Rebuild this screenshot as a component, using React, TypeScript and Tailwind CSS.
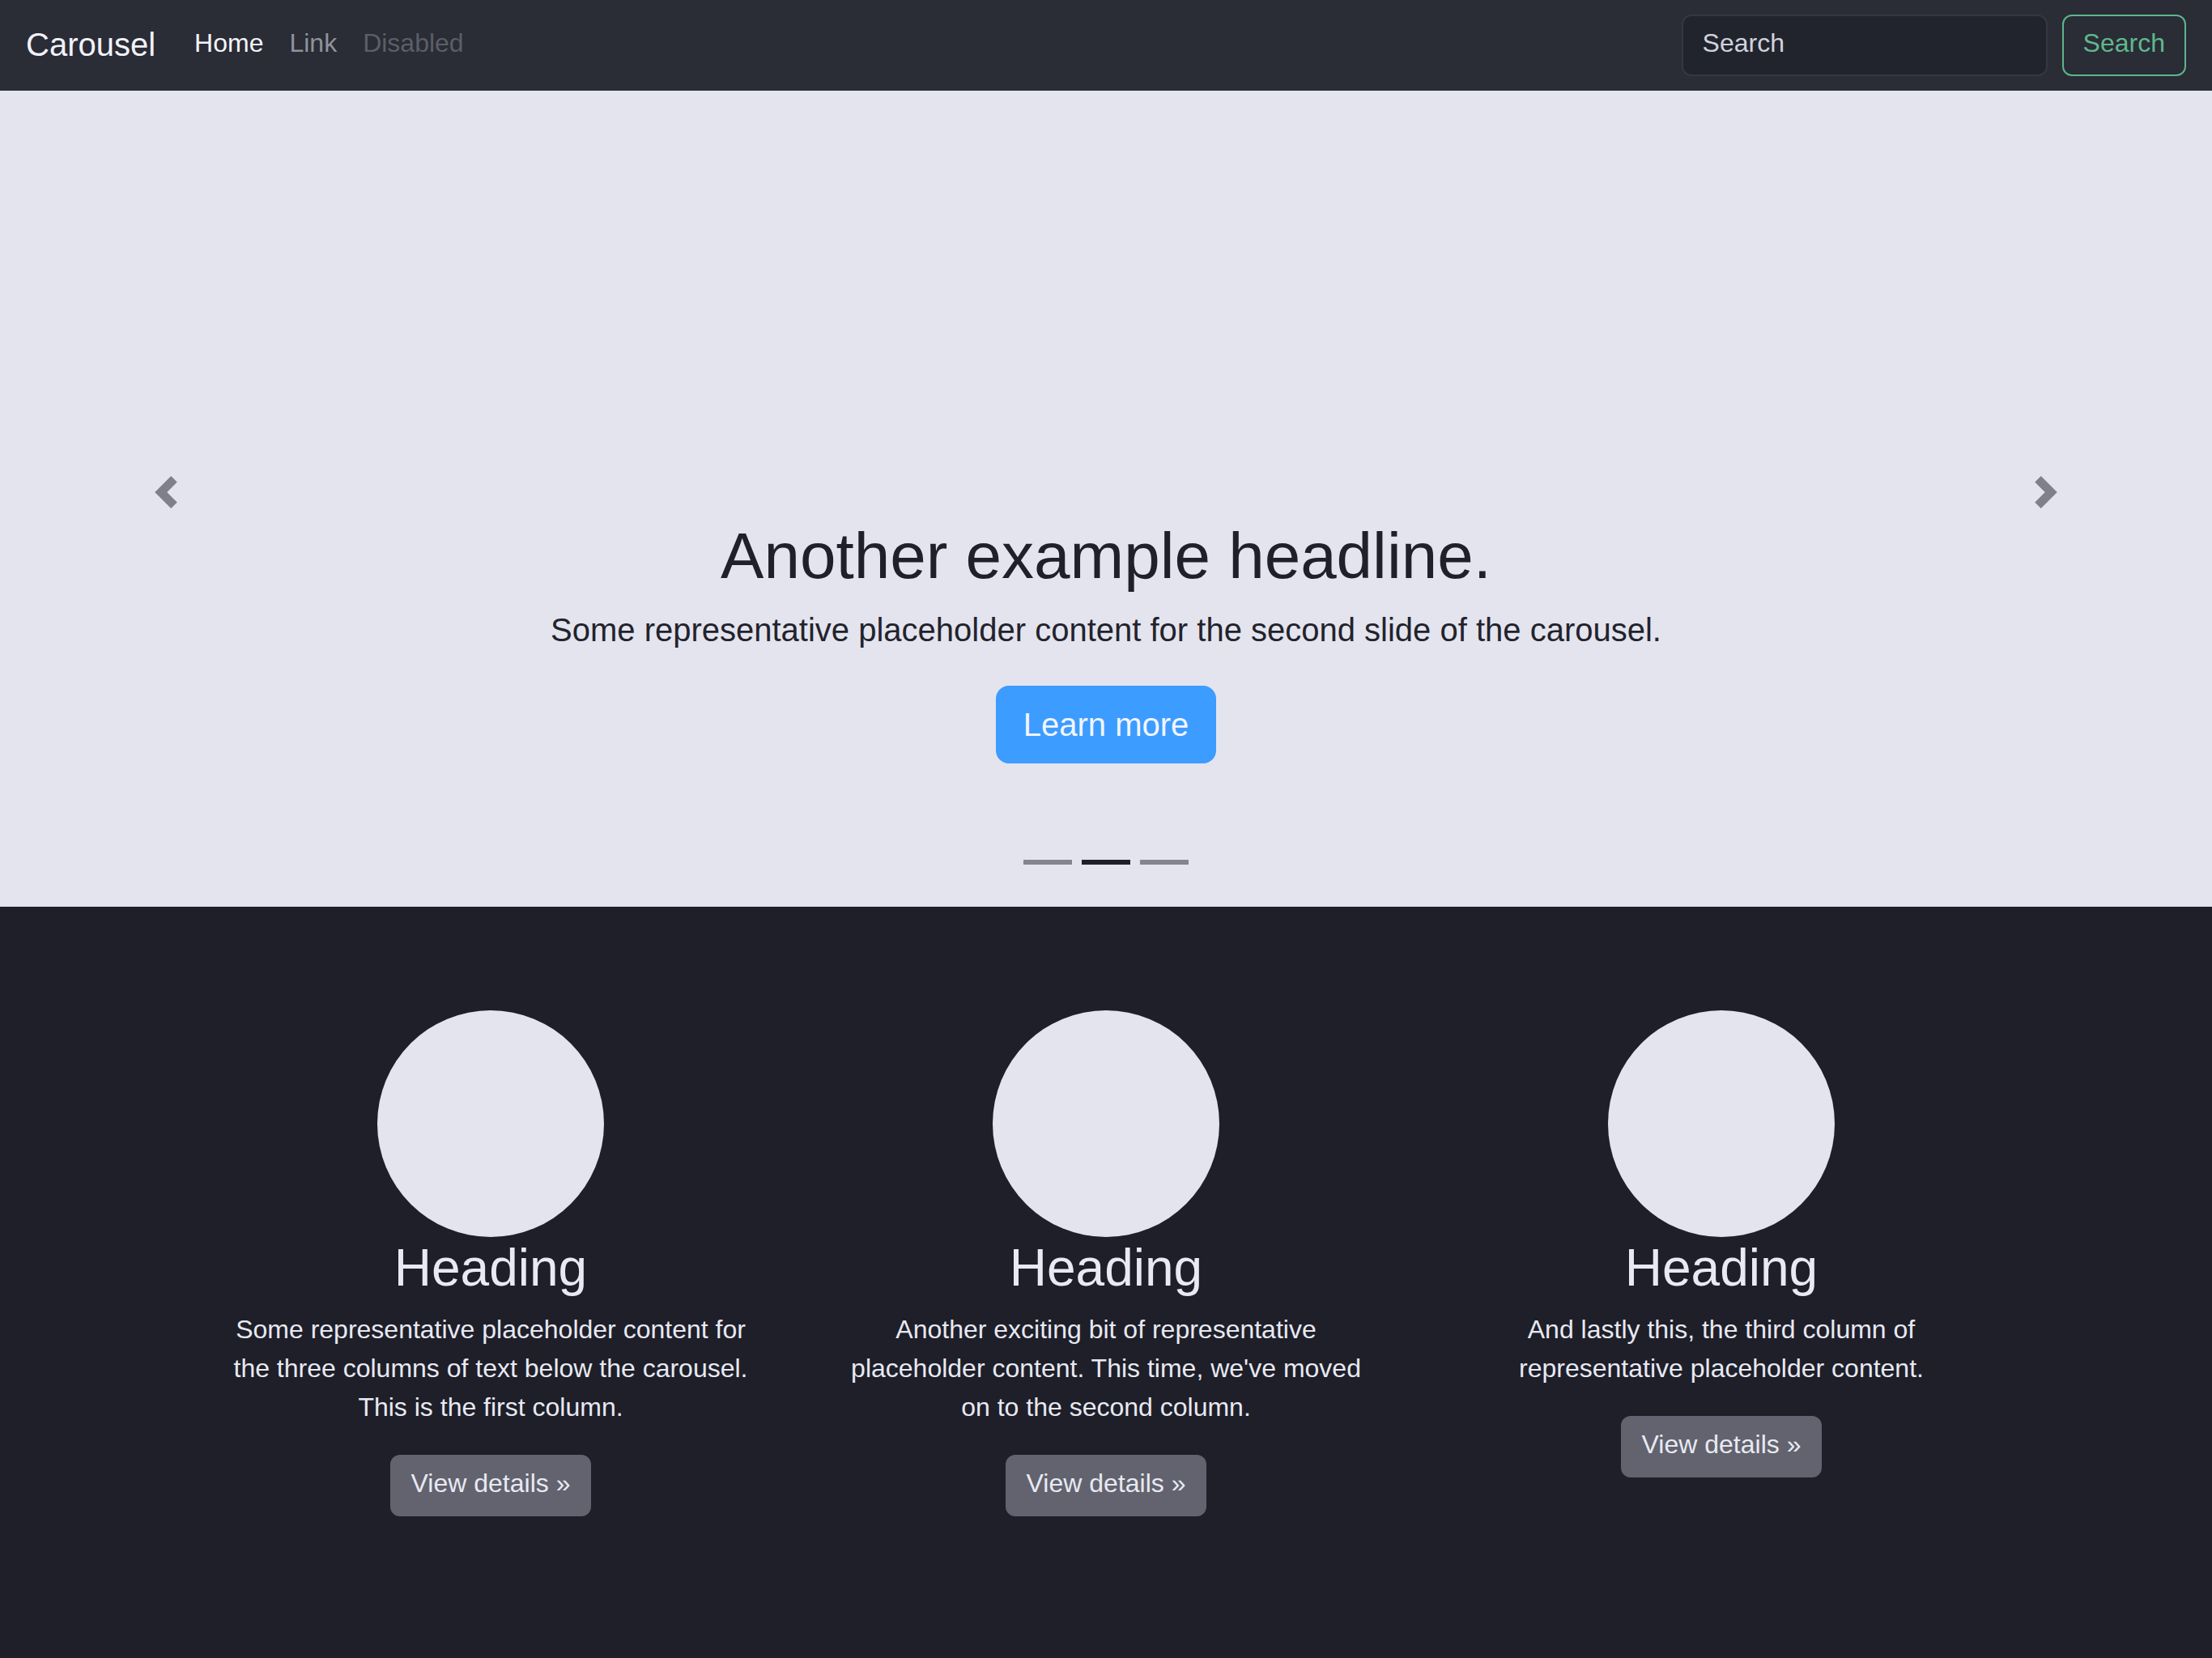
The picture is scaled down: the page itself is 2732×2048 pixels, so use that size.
import React from "react";

const features = [
  {
    text: "Some representative placeholder content for the three columns of text below the carousel. This is the first column.",
  },
  {
    text: "Another exciting bit of representative placeholder content. This time, we've moved on to the second column.",
  },
  {
    text: "And lastly this, the third column of representative placeholder content.",
  },
];

const ChevronLeft = () => (
  <svg width="40" height="40" viewBox="0 0 8 8" fill="#7f808b">
    <path d="M5.25 0l-4 4 4 4 1.5-1.5L4.25 4l2.5-2.5L5.25 0z" />
  </svg>
);

const ChevronRight = () => (
  <svg width="40" height="40" viewBox="0 0 8 8" fill="#7f808b">
    <path d="M2.75 0l-1.5 1.5L3.75 4l-2.5 2.5L2.75 8l4-4-4-4z" />
  </svg>
);

export default function App() {
  return (
    <div className="min-h-screen bg-[#1e1f29] font-['Liberation_Sans',Arial,sans-serif]">
      {/* navbar */}
      <nav className="flex h-[112px] items-center justify-between bg-[#2a2c36] px-[32px]">
        <div className="flex items-center">
          <span className="mr-[32px] pb-[3px] text-[40px] leading-[60px] text-[#f1f2f8]">
            Carousel
          </span>
          <ul className="flex pb-[6px] text-[32px] leading-[48px]">
            <li className="px-[16px] text-[#f4f4f8]">Home</li>
            <li className="px-[16px] text-[#90929b]">Link</li>
            <li className="px-[16px] text-[#5c5e66]">Disabled</li>
          </ul>
        </div>
        <div className="flex items-center">
          <input
            placeholder="Search"
            className="h-[76px] w-[452px] rounded-[12px] border-2 border-[#353741] bg-[#22242d] px-[24px] pt-[9px] pb-[15px] text-[32px] leading-[48px] text-[#d5d9e3] outline-none placeholder:text-[#cfd3dd]"
          />
          <button className="ml-[18px] h-[76px] rounded-[12px] border-2 border-[#5cb68b] px-[24px] pt-[9px] pb-[15px] text-[32px] leading-[48px] text-[#5fb88e]">
            Search
          </button>
        </div>
      </nav>

      {/* carousel */}
      <section className="relative flex h-[1008px] flex-col items-center justify-end bg-[#e4e4ee] pb-[52px]">
        <div className="absolute top-[-16px] bottom-0 left-0 flex w-[15%] items-center justify-center">
          <ChevronLeft />
        </div>
        <div className="absolute top-[-16px] bottom-0 right-0 flex w-[15%] items-center justify-center">
          <ChevronRight />
        </div>

        <div className="flex flex-col items-center text-center">
          <h1 className="mb-[16px] text-[80px] leading-[96px] text-[#1f2029]">
            Another example headline.
          </h1>
          <p className="-mt-[1px] text-[40px] leading-[56px] text-[#22232c]">
            Some representative placeholder content for the second slide of the carousel.
          </p>
          <button className="mt-[41px] h-[96px] rounded-[16px] border-2 border-[#3d9cff] bg-[#3d9cff] px-[32px] py-[16px] text-[40px] leading-[60px] text-[#f2f5ff]">
            Learn more
          </button>
        </div>

        <div className="mt-[119px] flex gap-[12px]">
          <span className="h-[6px] w-[60px] bg-[#84858f]" />
          <span className="h-[6px] w-[60px] bg-[#1e1f29]" />
          <span className="h-[6px] w-[60px] bg-[#84858f]" />
        </div>
      </section>

      {/* marketing */}
      <section className="pt-[128px]">
        <div className="mx-auto grid w-[2280px] grid-cols-3">
          {features.map((f, i) => (
            <div key={i} className="flex flex-col items-center px-[24px] text-center">
              <div className="h-[280px] w-[280px] rounded-full bg-[#e4e4ee]" />
              <h2 className="mb-[16px] text-[64px] leading-[76.8px] font-normal text-[#e9e9f3]">
                Heading
              </h2>
              <p className="mx-[24px] -mt-[3px] mb-[35px] text-[32px] leading-[48px] text-[#e8e9f2]">
                {f.text}
              </p>
              <button className="h-[76px] rounded-[12px] border-2 border-[#62636e] bg-[#62636e] px-[24px] pt-[9px] pb-[15px] text-[32px] leading-[48px] text-[#e8e9f3]">
                View details »
              </button>
            </div>
          ))}
        </div>
      </section>
    </div>
  );
}
